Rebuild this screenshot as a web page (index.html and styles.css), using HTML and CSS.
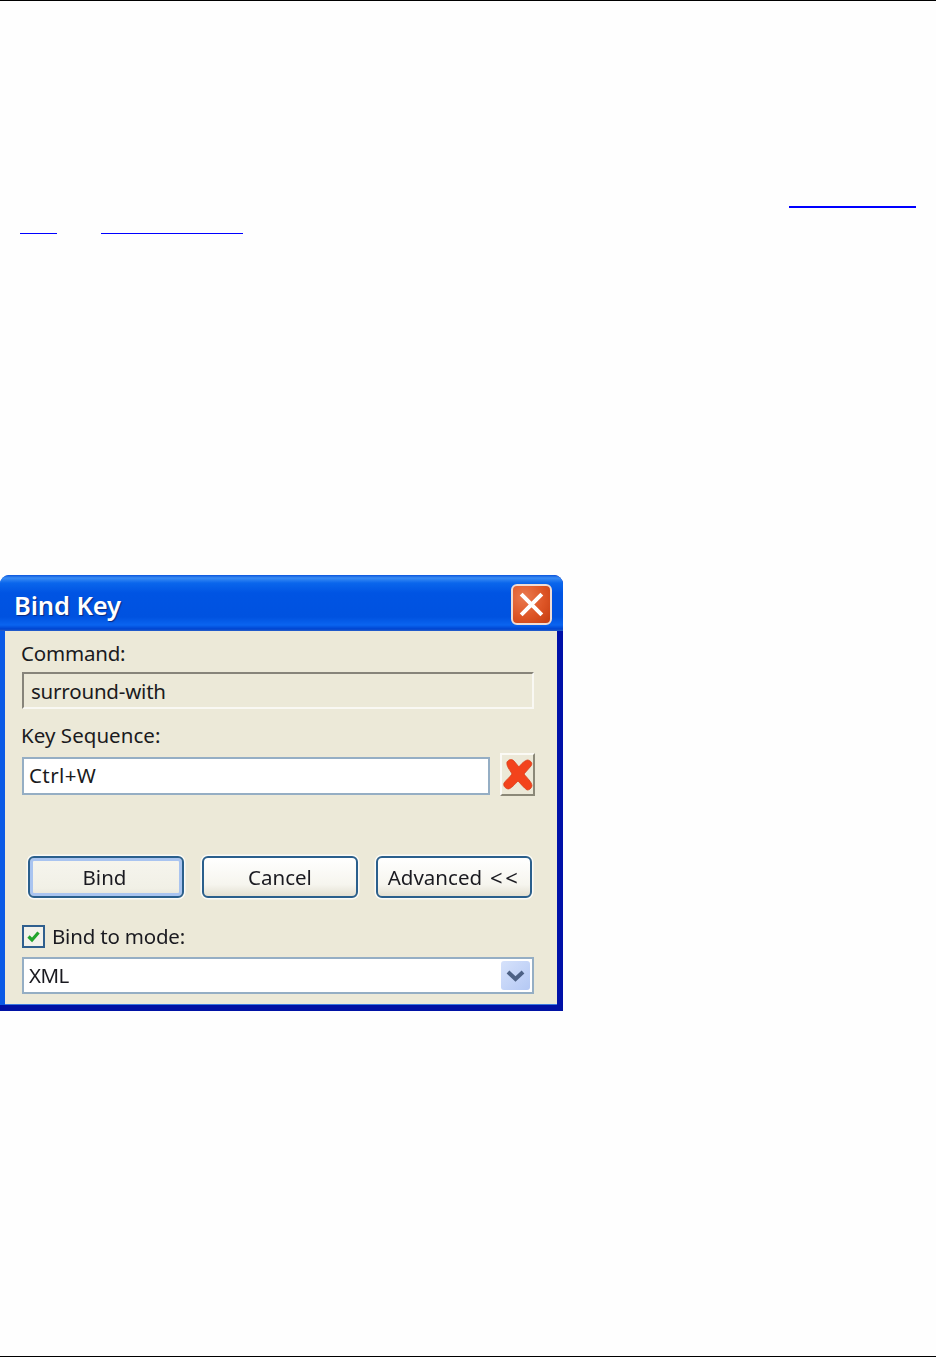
FILE: index.html
```html
<!DOCTYPE html>
<html lang="en">
<head>
<meta charset="utf-8">
<title>Bind Key</title>
<link rel="stylesheet" href="styles.css">
</head>
<body>
<div class="page">
  <div class="links links-first"><a class="link link-a" href="#" aria-label="link"></a></div>
  <div class="links links-second">
    <a class="link link-b" href="#" aria-label="link"></a>
    <a class="link link-c" href="#" aria-label="link"></a>
  </div>
  <section class="dialog">
    <header class="titlebar">
      <h1 class="title">Bind Key</h1>
      <div class="close">
        <svg viewBox="0 0 24 24" class="close-icon"><path d="M4.500 4.500 19.500 19.500M19.500 4.500 4.500 19.500"/></svg>
      </div>
    </header>
    <div class="client">
      <label class="label">Command:</label>
      <div class="field field-disabled">surround-with</div>
      <label class="label label-key">Key Sequence:</label>
      <div class="key-row">
        <div class="field field-key">Ctrl+W</div>
        <div class="clear">
          <svg viewBox="0 0 30 32" class="clear-icon"><path d="M4 3C6 0 9 0 11 2L16 8C18 5 22 1 25 1 28 2 30 4 28 7L21 15C24 19 29 23 29 27 28 30 26 31 24 31 21 29 17 24 15 22 12 25 8 30 5 30 2 29 0 27 1 24 3 21 7 18 9 15 7 11 3 7 4 3Z"/></svg>
        </div>
      </div>
      <div class="buttons">
        <div class="button button-default">Bind</div>
        <div class="button">Cancel</div>
        <div class="button">Advanced <span class="chevrons">&lt;&lt;</span></div>
      </div>
      <div class="check-row">
        <div class="checkbox">
          <svg viewBox="0 0 19 19" class="check-icon"><path d="M4.500 9.500 8 13 14.500 5.500"/></svg>
        </div>
        <span class="check-label">Bind to mode:</span>
      </div>
      <div class="field field-combo">
        <span class="combo-value">XML</span>
        <div class="drop">
          <svg viewBox="0 0 29 29" class="drop-icon"><path d="M7 11 14.500 18 22 11"/></svg>
        </div>
      </div>
    </div>
  </section>
  <div class="rule-bottom"></div>
</div>
</body>
</html>
```
FILE: styles.css
```css
html, body {
  margin: 0;
  padding: 0;
  background: #fefefe;
}
.page {
  height: 1357px;
  box-sizing: border-box;
  border-top: 1px solid #000;
  display: flex;
  flex-direction: column;
  font-family: "Noto Sans", "Liberation Sans", sans-serif;
  overflow: hidden;
}
.links {
  display: flex;
}
.links-first {
  margin-top: 205px;
  padding-left: 789px;
}
.links-second {
  margin-top: 25px;
  padding-left: 20px;
  gap: 44px;
}
.link {
  display: block;
  background: #0000ff;
}
.link-a { width: 127px; height: 2px; }
.link-b { width: 37px; height: 1px; }
.link-c { width: 142px; height: 1px; }

.dialog {
  width: 563px;
  height: 436px;
  margin-top: 341px;
  display: flex;
  flex-direction: column;
  box-sizing: border-box;
  border-radius: 9px 9px 0 0;
  background:
    linear-gradient(0deg, #0012a4 6px, transparent 6px),
    linear-gradient(90deg, #0a5ae6 0, #0056e0 60%, #0010a8 100%);
  filter: blur(0.5px);
  overflow: hidden;
}
.titlebar {
  height: 56px;
  flex: none;
  display: flex;
  align-items: center;
  justify-content: space-between;
  padding: 0 11px 0 14px;
  box-sizing: border-box;
  background: linear-gradient(180deg, #0a55dc 0, #3a8cf4 3px, #0a66ec 8px, #0054e3 18px, #0052e0 42px, #0a64f0 50px, #0044d0 54px, #2a60c8 56px);
}
.title {
  margin: 4px 0 0;
  font-size: 25.5px;
  line-height: 34px;
  font-weight: 600;
  letter-spacing: -0.1px;
  color: #fff;
  text-shadow: 1px 1px 1px #0a2a80;
}
.close {
  width: 41px;
  height: 41px;
  box-sizing: border-box;
  margin-top: 3px;
  border: 2px solid #f0dcd4;
  border-radius: 6px;
  background: radial-gradient(circle at 30% 30%, #ea7a50 0, #dd5526 55%, #c53c10 100%);
  display: flex;
  align-items: center;
  justify-content: center;
}
.close-icon {
  width: 33px;
  height: 33px;
  fill: none;
  stroke: #fff;
  stroke-width: 2.900;
}
.client {
  flex: 1;
  margin: 0 6px 6px 5px;
  padding: 11px 23px 0 17px;
  background: #ece9d8;
  box-shadow: inset 0 -1px 0 #3a78e0;
  color: #1a1a20;
  font-size: 20.5px;
  letter-spacing: -0.2px;
  line-height: 24px;
}
.label {
  display: block;
  height: 24px;
  line-height: 22px;
  margin-left: -1px;
}
.label-key {
  margin-top: 15px;
  letter-spacing: 0.05px;
}
.field {
  box-sizing: border-box;
  height: 37px;
  display: flex;
  align-items: center;
  padding-left: 5px;
  background: #fff;
  border: 2px solid #95aec4;
}
.field-disabled {
  margin-top: 6px;
  padding-left: 7px;
  background: #ece9d8;
  border-color: #87847a #f9f8f3 #f9f8f3 #87847a;
}
.key-row {
  margin-top: 5px;
  height: 43px;
  display: flex;
  align-items: center;
  justify-content: space-between;
  margin-right: -1px;
}
.field-key {
  width: 468px;
  height: 38px;
  margin-top: 2px;
  padding-bottom: 2px;
  letter-spacing: 0.4px;
}
.clear {
  width: 35px;
  height: 43px;
  box-sizing: border-box;
  border: 2px solid;
  border-color: #fbfaf5 #8b8878 #8b8878 #fbfaf5;
  display: flex;
  align-items: center;
  justify-content: center;
}
.clear-icon {
  width: 30px;
  height: 32px;
  fill: #f3431c;
  stroke: #d8401c;
  stroke-width: 0.800;
  stroke-linejoin: round;
}
.buttons {
  margin: 60px 2px 0 6px;
  display: flex;
  justify-content: space-between;
  letter-spacing: 0;
}
.button {
  width: 156px;
  height: 42px;
  box-sizing: border-box;
  display: flex;
  align-items: center;
  justify-content: center;
  gap: 8px;
  border: 2px solid #2a5f8c;
  border-radius: 6px;
  background: linear-gradient(180deg, #fff 0, #f6f5ee 70%, #e4e0d2 100%);
  box-shadow: 0 0 0 1.500px #fafaf6;
}
.button-default {
  padding-right: 3px;
  background: linear-gradient(180deg, #f6f5ee 0, #f1f0e6 80%, #e6e3d6 100%);
  box-shadow: 0 0 0 1.500px #fafaf6, inset 0 0 0 3px #a9c4f0;
}
.chevrons {
  letter-spacing: 2.500px;
  font-size: 22px;
}
.check-row {
  margin-top: 27px;
  height: 23px;
  display: flex;
  align-items: center;
  gap: 7px;
}
.check-label {
  padding-bottom: 2px;
}
.checkbox {
  width: 23px;
  height: 23px;
  box-sizing: border-box;
  border: 2px solid #2f5f8e;
  background: #f2f1ea;
  display: flex;
  align-items: center;
  justify-content: center;
}
.check-icon {
  width: 19px;
  height: 19px;
  fill: none;
  stroke: #22a42c;
  stroke-width: 3.200;
}
.field-combo {
  margin-top: 9px;
  justify-content: space-between;
  padding-right: 2px;
  letter-spacing: -0.6px;
}
.combo-value {
  padding-bottom: 2px;
}
.drop {
  width: 29px;
  height: 29px;
  border-radius: 3px;
  background: linear-gradient(135deg, #d6e2fb 0, #b4c8f4 100%);
}
.drop-icon {
  display: block;
  width: 29px;
  height: 29px;
  fill: none;
  stroke: #4d6185;
  stroke-width: 4;
}
.rule-bottom {
  margin-top: auto;
  height: 1px;
  background: #000;
}
```
